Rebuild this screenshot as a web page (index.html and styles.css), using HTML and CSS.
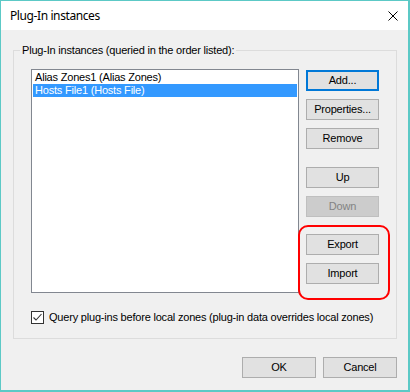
FILE: index.html
```html
<!DOCTYPE html>
<html lang="en">
<head>
  <meta charset="UTF-8">
  <title>Plug-In instances</title>
  <link rel="stylesheet" href="styles.css">
</head>
<body>

<div class="window">
  <div class="titlebar">
    <span class="title">Plug-In instances</span>
    <svg class="close" width="10" height="10" viewBox="0 0 10 10">
      <path d="M0.5 0.5 L9.5 9.5 M9.5 0.5 L0.5 9.5" stroke="#000" stroke-width="1" fill="none"/>
    </svg>
  </div>

  <div class="content">
    <fieldset class="group">
      <legend>Plug-In instances (queried in the order listed):</legend>

      <div class="row">
        <ul class="listbox">
          <li>Alias Zones1 (Alias Zones)</li>
          <li class="selected">Hosts File1 (Hosts File)</li>
        </ul>

        <div class="buttons">
          <a href="javascript:void(0)" class="btn default">Add...</a>
          <a href="javascript:void(0)" class="btn">Properties...</a>
          <a href="javascript:void(0)" class="btn">Remove</a>
          <a href="javascript:void(0)" class="btn up">Up</a>
          <a href="javascript:void(0)" class="btn disabled">Down</a>
          <div class="marked">
            <a href="javascript:void(0)" class="btn">Export</a>
            <a href="javascript:void(0)" class="btn">Import</a>
          </div>
        </div>
      </div>

      <label class="check">
        <span class="box">
          <svg width="11" height="11" viewBox="0 0 11 11">
            <path d="M1.5 5.5 L4 8 L9.5 2" stroke="#333" stroke-width="1.1" fill="none"/>
          </svg>
        </span>
        Query plug-ins before local zones (plug-in data overrides local zones)
      </label>
    </fieldset>

    <div class="footer">
      <a href="javascript:void(0)" class="btn wide">OK</a>
      <a href="javascript:void(0)" class="btn wide">Cancel</a>
    </div>
  </div>
</div>

</body>
</html>
```

FILE: styles.css
```css
* {
  margin: 0;
  padding: 0;
  list-style: none;
  box-sizing: border-box;
}

body {
  font: 400 11px/13px "Liberation Sans", Arial, sans-serif;
  letter-spacing: -0.2px;
  color: #000;
}

.window {
  width: 410px;
  height: 392px;
  border: 1px solid #5cc9c6;
  border-right-width: 2px;
  border-bottom-width: 2px;
  background-color: #f0f0f0;
  display: flex;
  flex-direction: column;
}

.titlebar {
  height: 29px;
  background-color: #fff;
  display: flex;
  align-items: center;
  padding-left: 9px;
}

.title {
  flex: 1;
  font: 400 12px/16px "Noto Sans", "Liberation Sans", sans-serif;
  letter-spacing: -0.4px;
}

.close {
  margin-right: 10px;
}

.content {
  flex: 1;
  padding: 13px 11px 0 12px;
}

.group {
  border: 1px solid #dcdcdc;
  padding: 12px 17px 14px 17px;
  min-width: 0;
}

.group legend {
  padding: 0 2px;
  margin-left: -11px;
  line-height: 14px;
}

.row {
  display: flex;
}

.listbox {
  flex: 1;
  height: 224px;
  border: 1px solid #828790;
  background-color: #fff;
  padding: 1px;
}

.listbox li {
  height: 13px;
  padding-left: 2px;
  white-space: nowrap;
}

.listbox li.selected {
  background-color: #3399ff;
  color: #fff;
}

.buttons {
  width: 73px;
  margin-left: 7px;
  padding-top: 1px;
  display: flex;
  flex-direction: column;
}

.btn {
  display: block;
  height: 21px;
  border: 1px solid #adadad;
  background-color: #e1e1e1;
  color: #000;
  text-decoration: none;
  text-align: center;
  line-height: 19px;
  margin-bottom: 8px;
}

.btn.default {
  border: 2px solid #0078d7;
  line-height: 17px;
}

.btn.up {
  margin-top: 10px;
}

.btn.disabled {
  background-color: #cccccc;
  border-color: #bfbfbf;
  color: #838383;
}

.marked {
  position: relative;
  margin-top: 9px;
}

.marked::before {
  content: "";
  position: absolute;
  top: -9px;
  left: -8px;
  right: -11px;
  bottom: -8px;
  border: 2.5px solid #ff0000;
  border-radius: 10px;
}

.check {
  display: flex;
  align-items: center;
  margin-top: 18px;
  height: 13px;
  white-space: nowrap;
}

.check .box {
  width: 13px;
  height: 13px;
  border: 1px solid #333;
  background-color: #fff;
  margin-right: 5px;
  display: flex;
}

.footer {
  display: flex;
  justify-content: flex-end;
  gap: 7px;
  margin-top: 18px;
}

.footer .btn {
  width: 74px;
  margin-bottom: 0;
}
```
